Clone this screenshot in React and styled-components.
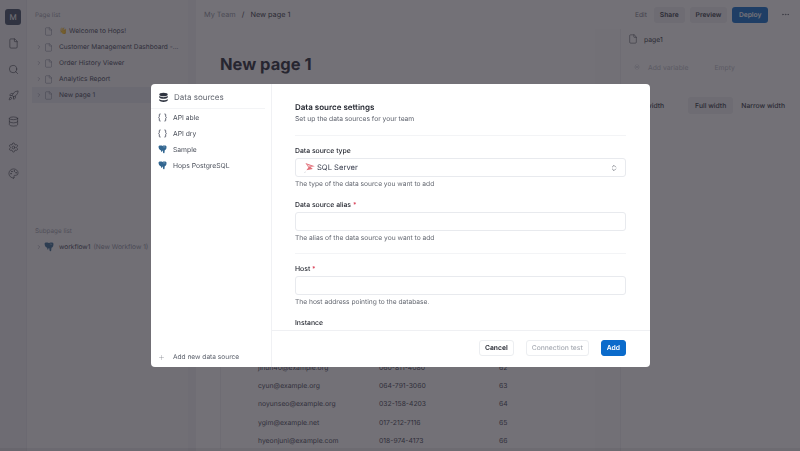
import React from "react";
import styled, { createGlobalStyle } from "styled-components";
import { File, Search, Rocket, Database, Settings, Palette, ChevronRight, ChevronsUpDown, Plus, MoreHorizontal, Variable } from "lucide-react";

const Global = createGlobalStyle`
  html, body { margin: 0; padding: 0; width: 800px; height: 451px; overflow: hidden; background: #fff; }
  * { box-sizing: border-box; }
  body { font-family: Inter, "Liberation Sans", sans-serif; color: #1f2430; text-rendering: geometricPrecision; }
`;

const Page = styled.div`
  position: relative; width: 800px; height: 451px; display: flex; overflow: hidden; background: #fff;
`;
const Rail = styled.nav`
  width: 27px; flex: none; display: flex; flex-direction: column; align-items: center; padding-top: 9px; gap: 12px;
  color: #2a2f3a; background: #f0f0f3; border-right: 1px solid #e8e8ec;
`;
const Avatar = styled.div`
  width: 16px; height: 16px; border-radius: 3px; background: #3b4a60; color: #fff;
  display: flex; align-items: center; justify-content: center; font-size: 8px; margin-bottom: -1px;
`;
const RailIcon = styled.span` height: 14px; display: flex; align-items: center; `;
const Side = styled.aside`
  width: 161px; flex: none; display: flex; flex-direction: column; background: #f8f8fa; padding-top: 10px;
`;
const SideLabel = styled.div`
  font-size: 6.3px; color: #9a9ea8; padding-left: 8px; height: 10px; line-height: 10px; margin-bottom: 3px;
`;
const Tree = styled.div` flex: 1; display: flex; flex-direction: column; `;
const TreeRow = styled.div`
  height: 16px; flex: none; display: flex; align-items: center; font-size: 6.6px; color: #3b4050; padding-left: 3px; margin-left: 5px;
  white-space: nowrap; background: ${p => (p.$active ? "#e6e9f0" : "transparent")};
`;
const Caret = styled.span`
  width: 8px; flex: none; display: flex; justify-content: center; color: #7a7f8a; visibility: ${p => (p.$hidden ? "hidden" : "visible")};
`;
const TreeIcon = styled.span` width: 15px; flex: none; display: flex; margin-left: 1px; color: #6a7080; `;
const Muted = styled.span` color: #8a8f9a; margin-left: 3px; `;
const SubBlock = styled.div` flex: none; height: 225px; `;
const Gutter = styled.div` width: 8px; flex: none; background: #f3f3f6; `;

const Main = styled.main` flex: 1; min-width: 0; display: flex; flex-direction: column; background: #fff; `;
const TopBar = styled.header`
  height: 29px; flex: none; display: flex; align-items: center; padding: 0 10px 0 8px; font-size: 7.3px; color: #2a2f3a;
`;
const Crumbs = styled.div` flex: 1; display: flex; gap: 6px; `;
const CrumbMuted = styled.span` color: #8a8f9a; `;
const TopActions = styled.div` display: flex; align-items: center; gap: 5px; font-size: 6.7px; font-weight: 600; `;
const EditLabel = styled.span` font-weight: 400; color: #6f7480; margin-right: 2px; `;
const TopBtn = styled.span`
  height: 16px; padding: 0 ${p => (p.$primary ? "6.5px" : "6px")}; border-radius: 3px; display: flex; align-items: center;
  background: ${p => (p.$primary ? "#0b6bcb" : "#eff0f3")};
  color: ${p => (p.$primary ? "#fff" : "#2a2f3a")};
`;
const Dots = styled.span` display: flex; margin-left: 8px; color: #5a5f6a; `;
const Body = styled.div` flex: 1; display: flex; min-height: 0; `;
const Canvas = styled.div` width: 399px; flex: none; padding: 25px 0 0 24px; display: flex; flex-direction: column; `;
const Title = styled.h1` margin: 0 0 284px; font-size: 16.5px; line-height: 20px; font-weight: 700; color: #1f2430; `;
const DataTable = styled.div` display: flex; flex-direction: column; border-left: 1px solid #f0f1f4; `;
const TableRow = styled.div`
  height: 18.3px; flex: none; display: grid; grid-template-columns: 37px 121px 120px 1fr; align-items: center; font-size: 6.8px; color: #3b4050;
`;
const Spare = styled.div` width: 25px; flex: none; background: #fbfbfc; `;
const Panel = styled.aside`
  flex: 1; min-width: 0; border-left: 1px solid #f0f0f3; font-size: 6.8px; color: #2a2f3a; padding-left: 8px;
`;
const PanelHead = styled.div` height: 20px; display: flex; align-items: center; gap: 6px; margin-left: -1px; `;
const PanelGhost = styled.div` display: flex; gap: 8px; color: #b9bdc6; margin-top: 13px; padding-left: 5px; align-items: center; height: 10px; `;
const GhostIcon = styled.span` display: flex; `;
const GhostValue = styled.span` margin-left: 18px; `;
const Widths = styled.div` display: flex; justify-content: flex-end; margin-top: 25px; padding-right: 8px; gap: 1px; `;
const WidthBtn = styled.span`
  height: 17px; padding: 0 7px; display: flex; align-items: center; border-radius: 3px; white-space: nowrap;
  background: ${p => (p.$active ? "#eff0f3" : "transparent")}; font-weight: 500;
  margin-left: ${p => (p.$active ? "16px" : "0")};
`;

const Scrim = styled.div`
  position: absolute; inset: 0; background: rgba(42, 40, 48, 0.66); backdrop-filter: blur(0.7px);
  border-bottom: 3px solid rgba(0, 0, 0, 0.05);
`;
const Modal = styled.div`
  position: absolute; left: 151px; top: 84px; width: 499px; height: 283px; background: #fff; border-radius: 4px;
  display: flex; overflow: hidden;
`;
const ModalNav = styled.div`
  width: 121px; flex: none; border-right: 1px solid #f0f1f4; display: flex; flex-direction: column;
`;
const NavHead = styled.div`
  height: 25px; margin-right: 6px; padding: 2px 0 0 7px; display: flex; align-items: center; gap: 5px; font-size: 8px; color: #62666f; border-bottom: 1px solid #f3f4f6; flex: none;
`;
const NavList = styled.div` flex: 1; display: flex; flex-direction: column; `;
const NavItem = styled.div`
  height: 16px; display: flex; align-items: center; gap: 6px; padding-left: 7px; font-size: 6.75px; color: #4a4f5a;
`;
const NavIcon = styled.span` width: 9px; display: flex; justify-content: center; color: #3b4050; `;
const AddNew = styled.div`
  height: 20px; flex: none; display: flex; align-items: center; gap: 8px; padding-left: 7px; font-size: 6.6px; color: #5a5f6a;
`;
const Content = styled.div` flex: 1; min-width: 0; display: flex; flex-direction: column; `;
const Scroll = styled.div` flex: 1; min-height: 0; overflow: hidden; padding: 18px 24px 0 23px; border-bottom: 1px solid #eff0f3; `;
const Heading = styled.h2` margin: 0; font-size: 8px; line-height: 11px; font-weight: 600; color: #23262f; `;
const Sub = styled.p` margin: 1px 0 0; font-size: 6.7px; line-height: 10px; color: #5a5f6a; `;
const Rule = styled.div` height: 1px; background: #f3f4f6; margin: ${p => p.$m || "11px 0 10px"}; `;
const Label = styled.label` display: block; font-size: 6.85px; line-height: 10px; font-weight: 500; color: #23262f; `;
const Req = styled.span` color: #d83a52; `;
const Field = styled.div`
  height: 19px; margin-top: 2px; border: 1px solid #e8eaee; border-radius: 3px; display: flex; align-items: center; padding: 0 7px; font-size: 7.6px; color: #3b4050; gap: 1px;
`;
const FieldText = styled.span` flex: 1; `;
const Hint = styled.p` margin: 2px 0 0; font-size: 6.65px; line-height: 11px; color: #62666f; `;
const Group = styled.div` margin-top: 10px; `;
const Footer = styled.div` height: 36px; flex: none; display: flex; align-items: center; justify-content: flex-end; gap: 12px; padding: 0 24px 3px 0; `;
const Btn = styled.button`
  height: 16px; border-radius: 3px; padding: 0 5px; font: 600 6.75px Inter, sans-serif; text-rendering: geometricPrecision; border: 1px solid ${p => (p.$primary ? "#0b6bcb" : "#eceef1")};
  background: ${p => (p.$primary ? "#0b6bcb" : "#fff")}; color: ${p => (p.$primary ? "#fff" : p.$disabled ? "#a9adb5" : "#23262f")};
  font-weight: ${p => (p.$disabled ? 500 : 600)};
`;

const Elephant = ({ size = 9 }) => (
  <svg width={size} height={size} viewBox="0 0 12 12" aria-hidden="true">
    <path d="M.8 1.5 C.8 .6 3 .4 5 .8 L6 1.3 L7 .8 C9 .4 11.2 .6 11.2 1.5 C11.8 4 10.6 6.5 9 7 L8.6 10.5 C8 11.4 6.8 11 6.6 9.5 L6.4 7.5 L5.4 7.5 L5 9 C4.4 9.6 3.8 8.5 3.8 7 C2 6.5 .4 4 .8 1.5Z" fill="#336791" />
    <path d="M7 2.5 C8 2.3 9 2.5 9.5 3" stroke="#a9c3d8" strokeWidth=".7" fill="none" />
  </svg>
);
const Flag = () => (
  <svg width="13" height="12" viewBox="0 0 13 12" aria-hidden="true">
    <path d="M1.6 11 L2.4 9.6" stroke="#c9ccd2" strokeWidth=".7" />
    <path d="M2.4 1 L11.8 4.3 L7.6 5 L9.8 7 L3.4 8.2 L5.4 5.6 Z" fill="#e2707a" />
    <path d="M4 2.6 L9 4.3 L5.6 4.8Z" fill="#f6d0d3" />
  </svg>
);
const StackIcon = () => (
  <svg width="11" height="11" viewBox="0 0 12 12" aria-hidden="true" fill="#2f3440">
    <ellipse cx="6" cy="2.6" rx="4.6" ry="1.9" />
    <path d="M1.4 4.2 C2.4 6.1 9.6 6.1 10.6 4.2 V6 C9.6 7.9 2.4 7.9 1.4 6Z" />
    <path d="M1.4 7.7 C2.4 9.6 9.6 9.6 10.6 7.7 V9.4 C9.6 11.3 2.4 11.3 1.4 9.4Z" />
  </svg>
);
const Mustache = () => (
  <svg width="9" height="9" viewBox="0 0 9 9" fill="none" stroke="#3b4050" strokeWidth=".8" aria-hidden="true">
    <path d="M2.6 1 H1.8 C1.3 1 1.3 1.5 1.3 2 V3.6 L.7 4.5 L1.3 5.4 V7 C1.3 7.5 1.3 8 1.8 8 H2.6" />
    <path d="M6.4 1 H7.2 C7.7 1 7.7 1.5 7.7 2 V3.6 L8.3 4.5 L7.7 5.4 V7 C7.7 7.5 7.7 8 7.2 8 H6.4" />
  </svg>
);

const pages = [
  { name: "👋 Welcome to Hops!", leaf: true },
  { name: "Customer Management Dashboard -..." },
  { name: "Order History Viewer" },
  { name: "Analytics Report" },
  { name: "New page 1", active: true },
];
const rows = [
  ["jihun40@example.org", "060-811-4080", "62"],
  ["cyun@example.org", "064-791-3060", "63"],
  ["noyunseo@example.org", "032-158-4203", "64"],
  ["ygim@example.net", "017-212-7116", "65"],
  ["hyeonjuni@example.com", "018-974-4173", "66"],
];
const sources = [
  { name: "API able", icon: <Mustache /> },
  { name: "API dry", icon: <Mustache /> },
  { name: "Sample", icon: <Elephant /> },
  { name: "Hops PostgreSQL", icon: <Elephant /> },
];

export default function App() {
  return (
    <Page>
      <Global />
      <Rail>
        <Avatar>M</Avatar>
        <RailIcon><File size={11} strokeWidth={1.3} /></RailIcon>
        <RailIcon><Search size={11} strokeWidth={1.3} /></RailIcon>
        <RailIcon><Rocket size={11} strokeWidth={1.3} /></RailIcon>
        <RailIcon><Database size={11} strokeWidth={1.3} /></RailIcon>
        <RailIcon><Settings size={11} strokeWidth={1.3} /></RailIcon>
        <RailIcon><Palette size={11} strokeWidth={1.3} /></RailIcon>
      </Rail>
      <Side>
        <SideLabel>Page list</SideLabel>
        <Tree>
          {pages.map(p => (
            <TreeRow key={p.name} $active={p.active}>
              <Caret $hidden={p.leaf}><ChevronRight size={6} /></Caret>
              <TreeIcon><File size={9} strokeWidth={1.2} /></TreeIcon>
              <span>{p.name}</span>
            </TreeRow>
          ))}
        </Tree>
        <SubBlock>
          <SideLabel>Subpage list</SideLabel>
          <TreeRow>
            <Caret><ChevronRight size={6} /></Caret>
            <TreeIcon><Elephant size={10} /></TreeIcon>
            <span>workflow1</span><Muted>(New Workflow 1)</Muted>
          </TreeRow>
        </SubBlock>
      </Side>
      <Gutter />
      <Main>
        <TopBar>
          <Crumbs><CrumbMuted>My Team</CrumbMuted><span>/</span><span>New page 1</span></Crumbs>
          <TopActions>
            <EditLabel>Edit</EditLabel>
            <TopBtn>Share</TopBtn>
            <TopBtn>Preview</TopBtn>
            <TopBtn $primary>Deploy</TopBtn>
            <Dots><MoreHorizontal size={9} /></Dots>
          </TopActions>
        </TopBar>
        <Body>
          <Canvas>
            <Title>New page 1</Title>
            <DataTable>
              {rows.map(r => (
                <TableRow key={r[0]}><span /><span>{r[0]}</span><span>{r[1]}</span><span>{r[2]}</span></TableRow>
              ))}
            </DataTable>
          </Canvas>
          <Spare />
          <Panel>
            <PanelHead><File size={10} strokeWidth={1.2} /><span>page1</span></PanelHead>
            <PanelGhost><GhostIcon><Variable size={6} /></GhostIcon><span>Add variable</span><GhostValue>Empty</GhostValue></PanelGhost>
            <Widths>
              <WidthBtn>Fixed width</WidthBtn>
              <WidthBtn $active>Full width</WidthBtn>
              <WidthBtn>Narrow width</WidthBtn>
            </Widths>
          </Panel>
        </Body>
      </Main>
      <Scrim />
      <Modal>
        <ModalNav>
          <NavHead><StackIcon /><span>Data sources</span></NavHead>
          <NavList>
            {sources.map(s => (
              <NavItem key={s.name}><NavIcon>{s.icon}</NavIcon><span>{s.name}</span></NavItem>
            ))}
          </NavList>
          <AddNew><Plus size={7} strokeWidth={1} /><span>Add new data source</span></AddNew>
        </ModalNav>
        <Content>
          <Scroll>
            <Heading>Data source settings</Heading>
            <Sub>Set up the data sources for your team</Sub>
            <Rule />
            <Label>Data source type</Label>
            <Field><Flag /><FieldText>SQL Server</FieldText><ChevronsUpDown size={8} color="#5a5f6a" /></Field>
            <Hint>The type of the data source you want to add</Hint>
            <Group>
              <Label>Data source alias <Req>*</Req></Label>
              <Field />
              <Hint>The alias of the data source you want to add</Hint>
            </Group>
            <Rule $m="9px 0 10px" />
            <Label>Host <Req>*</Req></Label>
            <Field />
            <Hint>The host address pointing to the database.</Hint>
            <Group>
              <Label>Instance</Label>
              <Field />
            </Group>
          </Scroll>
          <Footer>
            <Btn>Cancel</Btn>
            <Btn $disabled>Connection test</Btn>
            <Btn $primary>Add</Btn>
          </Footer>
        </Content>
      </Modal>
    </Page>
  );
}
